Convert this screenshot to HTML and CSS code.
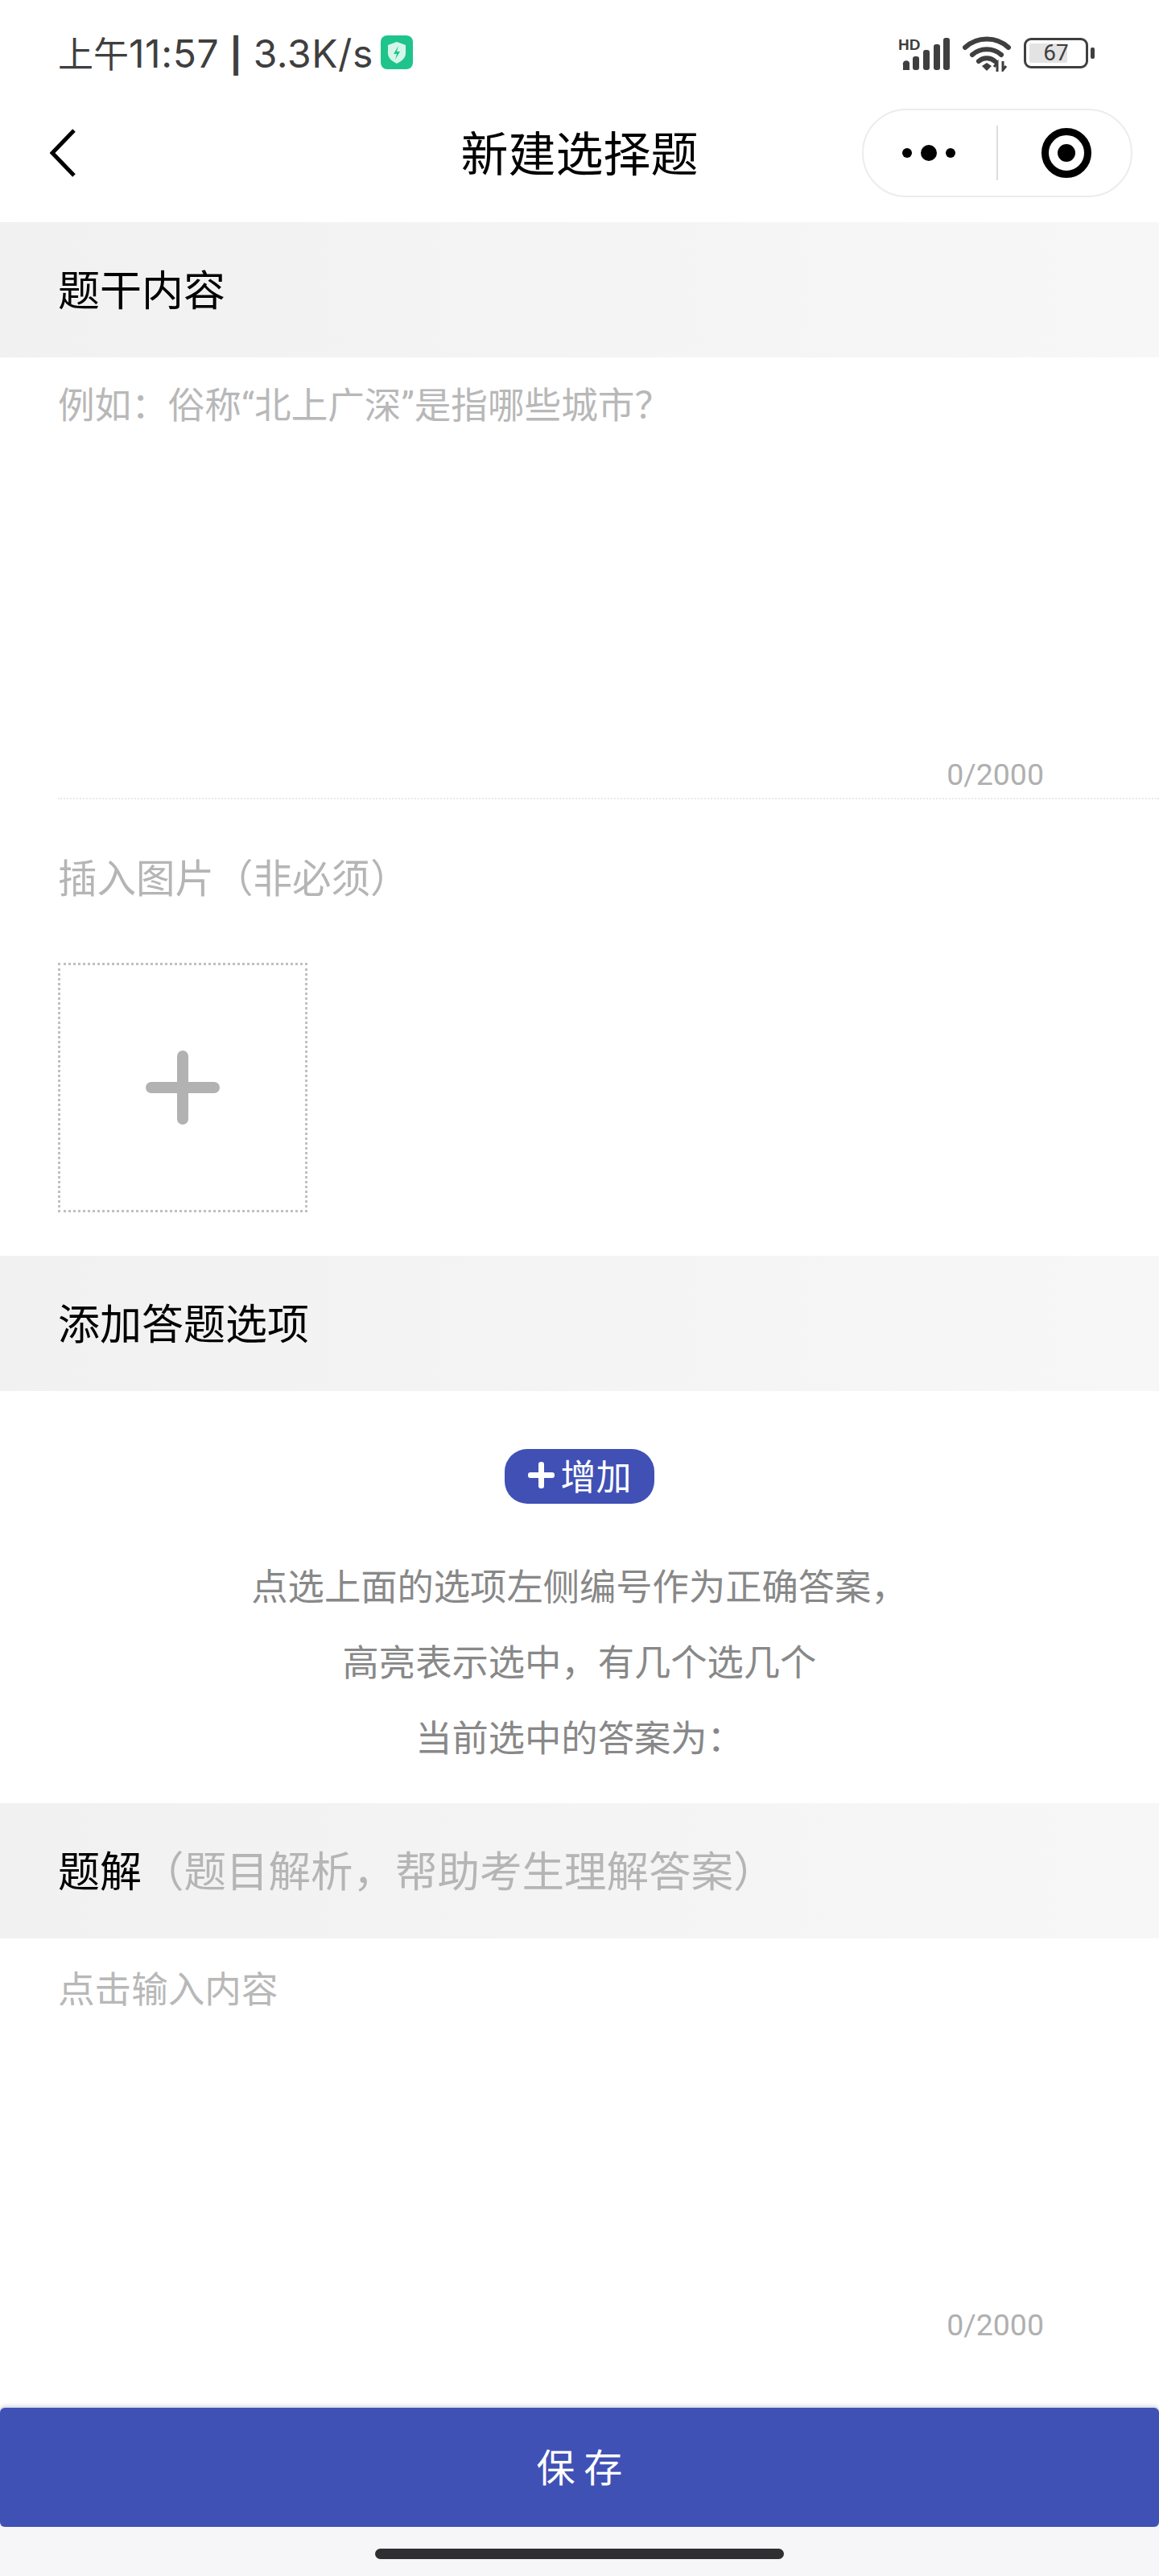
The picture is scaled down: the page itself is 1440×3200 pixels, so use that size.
FILE: index.html
```html
<!DOCTYPE html>
<html lang="zh-CN">
<head>
    <meta charset="UTF-8">
    <meta name="viewport" content="width=device-width, initial-scale=1.0">
    <title>新建选择题</title>
    <link rel="stylesheet" href="styles.css">
</head>
<body>
    <div class="page">
        <div class="statusbar">
            <div class="status-left">
                <span class="status-text"><span class="status-cjk">上午</span>11:57 <span class="status-sep">|</span> 3.3K/s</span>
                <svg class="shield" viewBox="0 0 40 42" width="40" height="42">
                    <rect width="40" height="42" rx="8" fill="#1fc48d"/>
                    <path d="M20 8l11 4v10c0 6-5 10-11 13C14 32 9 28 9 22V12z" fill="#d5f7ea"/>
                    <path d="M22 13l-6 10h4l-2 7 6-10h-4z" fill="#1fc48d"/>
                </svg>
            </div>
            <div class="status-right">
                <div class="signal">
                    <span class="hd">HD</span>
                    <svg viewBox="0 0 60 40" width="60" height="40">
                        <path d="M2 34a4 4 0 0 1 8-3v9H2z" fill="#3f3f3f"/>
                        <rect x="14" y="23" width="8" height="17" rx="3" fill="#3f3f3f"/>
                        <rect x="27" y="15" width="8" height="25" rx="3" fill="#3f3f3f"/>
                        <rect x="40" y="8" width="8" height="32" rx="3" fill="#3f3f3f"/>
                        <rect x="52" y="0" width="8" height="40" rx="3" fill="#3f3f3f"/>
                    </svg>
                </div>
                <svg class="wifi" viewBox="0 0 60 44" width="60" height="44">
                    <path d="M3 14C18 0 42 0 57 14M12 23c10-9 26-9 36 0M20 31c6-5 14-5 20 0" fill="none" stroke="#3f3f3f" stroke-width="6" stroke-linecap="round"/>
                    <path d="M24 37l6-4 6 4-6 6z" fill="#3f3f3f"/>
                    <path d="M43 44V33l-4 5M50 31v11l4-5" fill="none" stroke="#3f3f3f" stroke-width="3"/>
                </svg>
                <div class="battery">
                    <div class="battery-body">
                        <span class="battery-level"></span>
                        <span class="battery-num">67</span>
                    </div>
                    <span class="battery-nub"></span>
                </div>
            </div>
        </div>

        <div class="navbar">
            <svg class="back" viewBox="0 0 32 60" width="32" height="60">
                <path d="M30 2L3 30l27 28" fill="none" stroke="#000" stroke-width="5"/>
            </svg>
            <div class="nav-title">新建选择题</div>
            <div class="capsule">
                <svg class="capsule-more" viewBox="0 0 66 20" width="66" height="20">
                    <circle cx="6" cy="10" r="6" fill="#000"/>
                    <circle cx="33" cy="10" r="10" fill="#000"/>
                    <circle cx="60" cy="10" r="6" fill="#000"/>
                </svg>
                <span class="capsule-line"></span>
                <svg class="capsule-close" viewBox="0 0 62 62" width="62" height="62">
                    <circle cx="31" cy="31" r="26.5" fill="none" stroke="#000" stroke-width="9"/>
                    <circle cx="31" cy="31" r="11" fill="#000"/>
                </svg>
            </div>
        </div>

        <div class="section-head">题干内容</div>
        <div class="editor editor-stem">
            <div class="placeholder">例如：俗称“北上广深”是指哪些城市？</div>
            <div class="counter">0/2000</div>
        </div>

        <div class="insert">
            <div class="insert-label">插入图片（非必须）</div>
            <div class="upload">
                <span class="upload-plus"></span>
            </div>
        </div>

        <div class="section-head">添加答题选项</div>
        <div class="options">
            <button type="button" class="add-btn"><span class="add-plus"></span>增加</button>
            <div class="note">
                <p>点选上面的选项左侧编号作为正确答案，</p>
                <p>高亮表示选中，有几个选几个</p>
                <p>当前选中的答案为：</p>
            </div>
        </div>

        <div class="section-head">题解<span class="section-hint">（题目解析，帮助考生理解答案）</span></div>
        <div class="editor editor-analysis">
            <div class="placeholder">点击输入内容</div>
            <div class="counter">0/2000</div>
        </div>

        <button type="button" class="save-btn">保 存</button>
        <div class="home-area">
            <span class="home-bar"></span>
        </div>
    </div>
</body>
</html>
```

FILE: styles.css
```css
* {
    box-sizing: border-box;
}
body {
    margin: 0;
    background-color: #fff;
    font-family: "Noto Sans CJK SC", "Noto Sans", sans-serif;
    text-spacing-trim: space-all;
}
p {
    margin: 0;
}
.page {
    display: flex;
    flex-flow: column;
    width: 1440px;
    height: 3200px;
    overflow: hidden;
}

/* status bar */
.statusbar {
    display: flex;
    justify-content: space-between;
    height: 135px;
    padding: 44px 80px 0 72px;
}
.status-left {
    display: flex;
    align-items: flex-start;
    gap: 9px;
}
.status-text {
    font-family: "Inter", "Noto Sans CJK SC", sans-serif;
    font-size: 48px;
    line-height: 42px;
    letter-spacing: 0.6px;
    word-spacing: -1px;
    color: #3f3f3f;
    white-space: nowrap;
}
.status-cjk {
    font-family: "Noto Sans CJK SC", sans-serif;
    font-size: 44px;
    letter-spacing: 0;
}
.status-sep {
    font-size: 42px;
    font-weight: 700;
}
.status-right {
    display: flex;
    align-items: flex-start;
    gap: 16px;
    padding-top: 1px;
}
.signal {
    position: relative;
    width: 64px;
    height: 40px;
    display: flex;
    justify-content: flex-end;
    margin-top: 2px;
}
.hd {
    position: absolute;
    left: 0;
    top: -1px;
    font-family: "Liberation Sans", sans-serif;
    font-size: 19px;
    line-height: 20px;
    font-weight: 700;
    color: #3f3f3f;
}
.battery {
    display: flex;
    align-items: center;
    gap: 3px;
    height: 38px;
    margin-top: 2px;
}
.battery-body {
    position: relative;
    display: flex;
    align-items: center;
    justify-content: center;
    width: 80px;
    height: 38px;
    border: 3px solid #3f3f3f;
    border-radius: 9px;
}
.battery-level {
    position: absolute;
    left: 4px;
    top: 4px;
    bottom: 4px;
    width: 47px;
    background-color: #e3e3e3;
    border-radius: 2px;
}
.battery-num {
    position: relative;
    font-family: "Roboto", sans-serif;
    font-size: 28px;
    line-height: 30px;
    color: #3f3f3f;
}
.battery-nub {
    width: 5px;
    height: 14px;
    background-color: #3f3f3f;
    border-radius: 2px;
}

/* nav bar */
.navbar {
    position: relative;
    display: flex;
    align-items: center;
    justify-content: space-between;
    height: 141px;
    padding: 0 33px 31px 62px;
}
.nav-title {
    position: absolute;
    left: 0;
    right: 0;
    top: 18px;
    text-align: center;
    font-size: 59px;
    line-height: 70px;
    color: #000;
    pointer-events: none;
}
.capsule {
    display: flex;
    align-items: center;
    width: 336px;
    height: 110px;
    padding-left: 48px;
    border: 2px solid #ececec;
    border-radius: 55px;
}
.capsule-line {
    width: 2px;
    height: 68px;
    margin: 0 54px 0 51px;
    background-color: #dedede;
}

/* section headers */
.section-head {
    flex: none;
    height: 168px;
    padding-left: 72px;
    background: linear-gradient(to right, #f1f1f1, #f7f7f7);
    font-size: 52px;
    line-height: 163px;
    color: #000;
}
.section-hint {
    font-size: 52.5px;
    color: #b5b5b5;
}

/* editors */
.editor {
    display: flex;
    flex-flow: column;
    align-items: flex-start;
    margin-left: 72px;
}
.placeholder {
    font-family: "Roboto", "Noto Sans CJK SC", sans-serif;
    font-size: 45.6px;
    line-height: 60px;
    color: #b8b8b8;
}
.counter {
    align-self: flex-end;
    margin-top: auto;
    margin-right: 143px;
    font-family: "Roboto", sans-serif;
    font-size: 37.5px;
    line-height: 40px;
    color: #b0b0b0;
}
.editor-stem {
    height: 549px;
    padding: 31px 0 9px;
    border-bottom: 2px dotted #e9e9e9;
}
.editor-analysis {
    height: 583px;
    padding: 35px 0 83px;
}

/* image upload */
.insert {
    height: 567px;
    padding: 65px 0 0 72px;
}
.insert-label {
    font-size: 48.5px;
    line-height: 60px;
    color: #b5b5b5;
}
.upload {
    display: flex;
    align-items: center;
    justify-content: center;
    width: 310px;
    height: 310px;
    margin-top: 78px;
    border: 3px dotted #c0c0c0;
}
.upload-plus {
    position: relative;
    width: 92px;
    height: 92px;
}
.upload-plus::before,
.upload-plus::after {
    content: "";
    position: absolute;
    background-color: #b2b2b2;
    border-radius: 7px;
}
.upload-plus::before {
    left: 0;
    right: 0;
    top: 39px;
    height: 14px;
}
.upload-plus::after {
    top: 0;
    bottom: 0;
    left: 39px;
    width: 14px;
}

/* options */
.options {
    display: flex;
    flex-flow: column;
    align-items: center;
    height: 512px;
    padding-top: 72px;
}
.add-btn {
    display: flex;
    align-items: center;
    justify-content: center;
    gap: 8px;
    width: 186px;
    height: 68px;
    padding: 0 0 3px;
    border: 0;
    border-radius: 28px;
    background-color: #4050b5;
    color: #fff;
    font-family: inherit;
    font-size: 44px;
    line-height: 65px;
}
.add-plus {
    position: relative;
    width: 33px;
    height: 33px;
}
.add-plus::before,
.add-plus::after {
    content: "";
    position: absolute;
    background-color: #fff;
    border-radius: 3px;
}
.add-plus::before {
    left: 0;
    right: 0;
    top: 13px;
    height: 7px;
}
.add-plus::after {
    top: 0;
    bottom: 0;
    left: 13px;
    width: 7px;
}
.note {
    margin-top: 53px;
    text-align: center;
    font-size: 45.3px;
    line-height: 94px;
    color: #888;
}

/* footer */
.save-btn {
    flex: none;
    width: 100%;
    height: 148px;
    padding: 0 0 6px;
    border: 0;
    border-radius: 6px;
    background-color: #4051b5;
    box-shadow: 0 0 5px rgba(64, 81, 181, 0.3), 0 -3px 6px rgba(0, 0, 0, 0.08);
    color: #fff;
    font-family: inherit;
    font-size: 48px;
    line-height: 142px;
}
.home-area {
    flex: 1;
    display: flex;
    justify-content: center;
    padding-top: 27px;
    background-color: #f6f6f8;
}
.home-bar {
    width: 508px;
    height: 13px;
    background-color: #2f2f33;
    border-radius: 7px;
}
```
